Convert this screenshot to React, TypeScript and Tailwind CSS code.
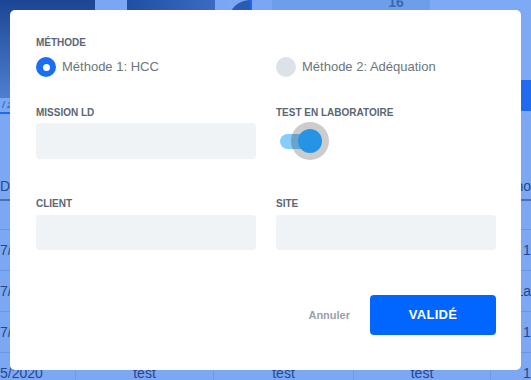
import React from 'react';

const rows = [
  { date: '7/05/2020', end: '1' },
  { date: '7/05/2020', end: 'La' },
  { date: '7/05/2020', end: '1' },
  { date: '5/2020', end: '1' },
];

function Backdrop() {
  return (
    <div className="h-[380px] w-full overflow-hidden bg-[#7ca7f3] text-[#24468e] font-['Liberation_Sans',Arial,sans-serif]">
      {/* top cards */}
      <div className="flex h-[114px]">
        <div className="flex w-[250px] flex-col border-b-2 border-[#1f66f0]">
          <div className="flex h-[98px]">
            <div className="w-[95px] bg-gradient-to-b from-[#1c4694] to-[#4f7fd0]" />
            <div className="w-[32px] bg-[#7aa6f5]" />
            <div className="w-[88px] bg-gradient-to-r from-[#1f4fa2] to-[#3b6cc2]" />
            <div className="w-[13px] bg-[#7aa6f5]" />
            <div className="w-[22px] rounded-tl-full bg-[#2a5cb5]" />
          </div>
          <div className="pl-[2px] text-[9px] font-bold italic leading-[14px] text-[#2a6be0]">/ 2020</div>
        </div>
        <div className="w-[2px] bg-[#1f66f0]" />
        <div className="w-[20px] bg-[#7aa6f5]" />
        <div className="flex w-[158px] items-start justify-center overflow-hidden bg-[#6c9ee9] pl-[90px]">
          <span className="-mt-[5px] text-[14px] font-bold leading-[14px] text-[#3d67b5]">16</span>
        </div>
        <div className="flex flex-1 flex-col bg-[#7eaaf5]">
          <div className="h-[80px]" />
          <div className="ml-auto h-[31px] w-[40px] bg-[#1f6cf0]" />
        </div>
      </div>

      {/* table */}
      <div className="h-[56px]" />
      <div className="flex h-[31px] items-end justify-between border-b-2 border-[#4d6fae] pb-[2px] text-[14px]">
        <span>Date</span>
        <span>Pho</span>
      </div>
      <div className="h-[29px] border-b border-[#6a95df]" />
      {rows.map((r, i) => (
        <div key={i} className="flex h-[41px] items-center border-b border-[#6a95df] text-[14px]">
          <span className="w-[76px] border-r border-[#6f9ae4]">{r.date}</span>
          <span className="w-[138px] border-r border-[#6f9ae4] text-center">test</span>
          <span className="w-[140px] border-r border-[#6f9ae4] text-center">test</span>
          <span className="w-[137px] border-r border-[#6f9ae4] text-center">test</span>
          <span className="flex-1 pl-[32px]">{r.end}</span>
        </div>
      ))}
    </div>
  );
}

function Label({ children }: { children: React.ReactNode }) {
  return (
    <div className="text-[10px] font-bold uppercase leading-[12px] text-[#5b6675]">{children}</div>
  );
}

function Radio({ checked, label }: { checked?: boolean; label: string }) {
  return (
    <div className="flex h-[20px] items-center">
      {checked ? (
        <div className="flex h-[20px] w-[20px] items-center justify-center rounded-full bg-[#1a6ef5]">
          <div className="h-[7px] w-[7px] rounded-full bg-white" />
        </div>
      ) : (
        <div className="h-[20px] w-[20px] rounded-full bg-[#dce2e8]" />
      )}
      <span className="ml-[6px] text-[13px] text-[#6c757d]">{label}</span>
    </div>
  );
}

function Field({ className }: { className: string }) {
  return <div className={`rounded-[4px] bg-[#f0f3f6] ${className}`} />;
}

function Toggle() {
  return (
    <div className="relative mt-[2px] h-[40px] w-[60px]">
      <div className="absolute left-[4px] top-[13px] h-[15px] w-[36px] rounded-full bg-[#86cdfb]" />
      <div className="absolute left-[15px] top-[1px] h-[38px] w-[38px] rounded-full bg-black/20" />
      <div className="absolute left-[22px] top-[8px] h-[24px] w-[24px] rounded-full bg-[#2594e5]" />
    </div>
  );
}

export default function App() {
  return (
    <div className="relative h-[380px] w-[531px] overflow-hidden">
      <Backdrop />

      {/* Modal */}
      <div className="absolute inset-0 p-[10px] font-['Liberation_Sans',Arial,sans-serif]">
        <div className="flex h-full flex-col rounded-[5px] bg-white pl-[26px] pr-[25px] pt-[27px]">
          <Label>Méthode</Label>
          <div className="mt-[8px] grid grid-cols-2 gap-5">
            <Radio checked label="Méthode 1: HCC" />
            <Radio label="Méthode 2: Adéquation" />
          </div>

          <div className="mt-[30px] grid grid-cols-2 gap-5">
            <div>
              <Label>Mission LD</Label>
              <Field className="mt-[4px] h-[36px]" />
            </div>
            <div>
              <Label>Test en laboratoire</Label>
              <Toggle />
            </div>
          </div>

          <div className="mt-[37px] grid grid-cols-2 gap-5">
            <div>
              <Label>Client</Label>
              <Field className="mt-[5px] h-[35px]" />
            </div>
            <div>
              <Label>Site</Label>
              <Field className="mt-[5px] h-[35px]" />
            </div>
          </div>

          <div className="mt-[45px] flex items-center justify-end">
            <button className="text-[11px] font-bold text-[#9ba1a8]">Annuler</button>
            <button className="ml-[20px] h-[40px] w-[126px] rounded-[4px] bg-[#0066ff] text-[13px] font-bold uppercase tracking-[0.3px] text-white">
              Validé
            </button>
          </div>
        </div>
      </div>
    </div>
  );
}
